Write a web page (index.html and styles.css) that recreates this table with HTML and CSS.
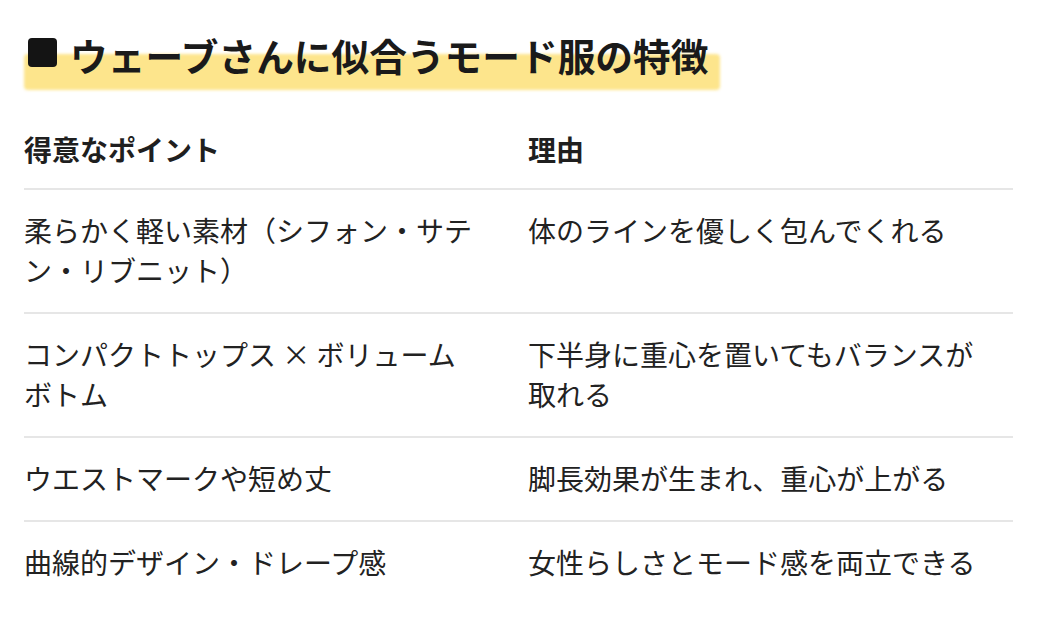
FILE: index.html
```html
<!DOCTYPE html>
<html lang="ja">
<head>
<meta charset="utf-8">
<link rel="stylesheet" href="styles.css">
</head>
<body>
<main class="page">
  <h2 class="title"><span class="title-mark"></span><span class="title-text">ウェーブさんに似合うモード服の特徴</span></h2>
  <table class="points">
    <colgroup><col class="col-a"><col class="col-b"></colgroup>
    <thead>
      <tr><th>得意なポイント</th><th>理由</th></tr>
    </thead>
    <tbody>
      <tr><td>柔らかく軽い素材（シフォン・サテン・リブニット）</td><td>体のラインを優しく包んでくれる</td></tr>
      <tr><td>コンパクトトップス × ボリュームボトム</td><td>下半身に重心を置いてもバランスが取れる</td></tr>
      <tr><td>ウエストマークや短め丈</td><td>脚長効果が生まれ、重心が上がる</td></tr>
      <tr><td>曲線的デザイン・ドレープ感</td><td>女性らしさとモード感を両立できる</td></tr>
    </tbody>
  </table>
</main>
</body>
</html>
```
FILE: styles.css
```css
html, body {
  margin: 0;
  padding: 0;
  background: #ffffff;
}
body {
  font-family: "Noto Sans CJK JP", "Noto Sans", sans-serif;
  color: #222222;
}
.page {
  padding: 30px 0 0 24px;
  width: 989px;
}
.title {
  position: relative;
  display: inline-flex;
  align-items: center;
  gap: 13px;
  margin: 0;
  padding: 0 12px 11px 4px;
  font-size: 37.7px;
  line-height: 49px;
  font-weight: 700;
  color: #1a1a1a;
  z-index: 0;
}
.title::before {
  content: "";
  position: absolute;
  left: 0;
  right: 0;
  top: 24px;
  bottom: 0;
  background: #fde58c;
  border-radius: 4px;
  filter: blur(1.5px);
  z-index: -1;
}
.title-mark {
  display: inline-block;
  width: 29px;
  height: 29px;
  border-radius: 4px;
  background: #141414;
  margin-top: -4px;
}
.points {
  margin-top: 19px;
  width: 989px;
  table-layout: fixed;
  border-collapse: collapse;
  font-size: 28px;
  line-height: 40px;
}
.col-a { width: 504px; }
.points th,
.points td {
  text-align: left;
  vertical-align: top;
  padding: 20px 22px 22px 0;
}
.points th:first-child,
.points td:first-child {
  padding-right: 46px;
}
.points th {
  font-weight: 700;
  padding-bottom: 19px;
  color: #1f1f1f;
}
.points thead tr,
.points tbody tr {
  border-bottom: 2px solid #e6e6e6;
}
.points tbody tr:last-child {
  border-bottom: none;
}
.points td {
  font-weight: 400;
}
```
